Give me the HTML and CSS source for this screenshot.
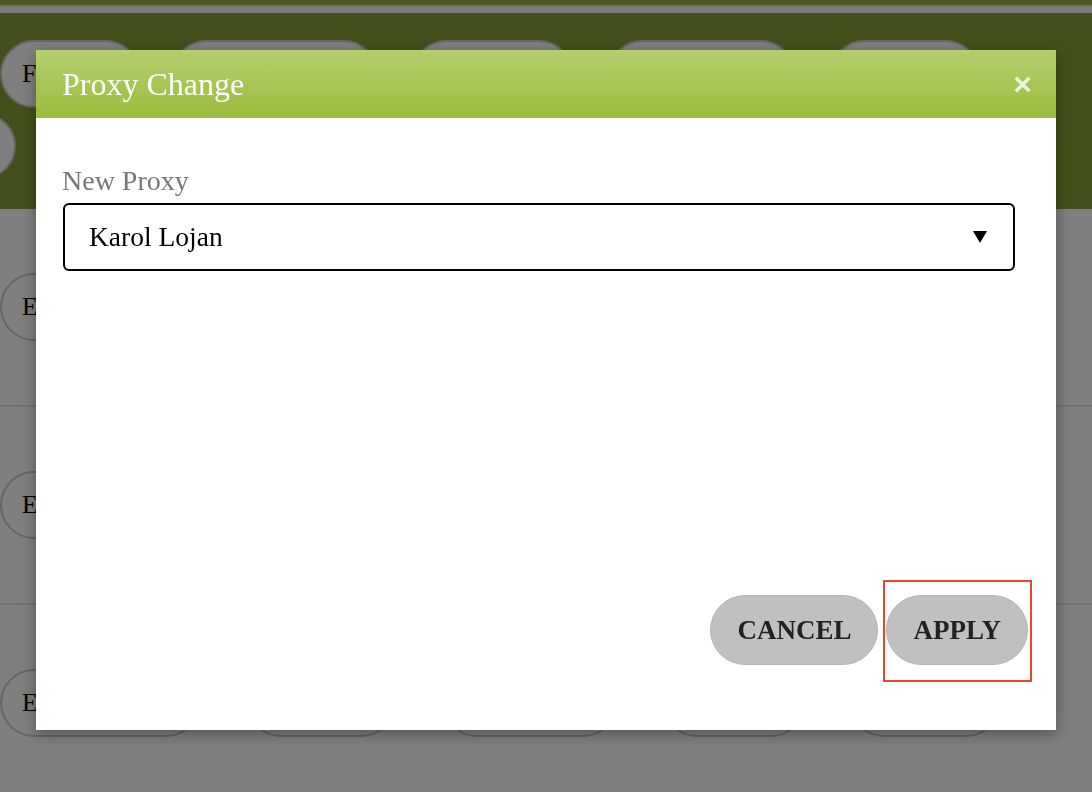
FILE: index.html
```html
<!DOCTYPE html>
<html lang="en">

<head>
    <meta charset="UTF-8">
    <meta name="viewport" content="width=device-width, initial-scale=1.0">
    <title>Proxy Change</title>
    <link rel="stylesheet" href="styles.css">
</head>

<body>
    <div class="topstrip"></div>

    <header class="filters">
        <div class="pill-row">
            <button class="pill">Filter</button>
            <button class="pill">Employees</button>
            <button class="pill">Teams</button>
            <button class="pill">Locations</button>
            <button class="pill">Status</button>
        </div>
        <div class="pill-row">
            <button class="pill pill-cut" aria-label="More"></button>
        </div>
    </header>

    <section class="list">
        <div class="list-row">
            <button class="pill">Edit Proxy</button>
            <button class="pill">Details</button>
            <button class="pill">History</button>
            <button class="pill">Notes</button>
            <button class="pill">Remove</button>
        </div>
        <div class="list-row">
            <button class="pill">Edit Proxy</button>
            <button class="pill">Details</button>
            <button class="pill">History</button>
            <button class="pill">Notes</button>
            <button class="pill">Remove</button>
        </div>
        <div class="list-row">
            <button class="pill">Edit Proxy</button>
            <button class="pill">Details</button>
            <button class="pill">History</button>
            <button class="pill">Notes</button>
            <button class="pill">Remove</button>
        </div>
    </section>

    <div class="overlay"></div>

    <div class="modal">
        <div class="modal-head">
            <h2>Proxy Change</h2>
            <span class="close">&times;</span>
        </div>

        <div class="modal-body">
            <label class="field-label" for="proxy">New Proxy</label>
            <div class="select" id="proxy">
                <span>Karol Lojan</span>
                <svg class="caret" width="14" height="12" viewBox="0 0 14 12">
                    <polygon points="0,0 14,0 7,12" fill="#000" />
                </svg>
            </div>

            <div class="modal-foot">
                <button class="bt">CANCEL</button>
                <span class="apply-wrap">
                    <button class="bt">APPLY</button>
                    <span class="highlight"></span>
                </span>
            </div>
        </div>
    </div>
</body>
</html>
```

FILE: styles.css
```css
body {
    margin: 0;
    padding: 0;
    background: #fff;
    font-family: "Liberation Serif", "Times New Roman", serif;
    overflow: hidden;
}
.topstrip {
    height: 7px;
    background: #96ac42;
    border-bottom: 6px solid #f8f8f8;
    box-shadow: inset 0 -2px 0 #dedede;
}
.filters {
    background: #88a038;
    padding: 27px 0 30px;
    display: flex;
    flex-direction: column;
    gap: 5px;
}
.pill-row,
.list-row {
    display: flex;
}
.pill {
    height: 68px;
    box-sizing: border-box;
    background: #fff;
    border: 2px solid #cacaca;
    border-radius: 34px;
    padding: 0 20px;
    font-family: "Liberation Serif", serif;
    font-size: 26px;
    color: #000;
    text-align: left;
    white-space: nowrap;
    flex-shrink: 0;
}
.pill-row .pill:nth-child(1) { width: 140px; }
.pill-row .pill:nth-child(2) { width: 206px; margin-left: 32px; }
.pill-row .pill:nth-child(3) { width: 161px; margin-left: 34px; }
.pill-row .pill:nth-child(4) { width: 187px; margin-left: 35px; }
.pill-row .pill:nth-child(5) { width: 150px; margin-left: 35px; }
.pill-row .pill.pill-cut {
    width: 66px;
    height: 66px;
    margin-left: -50px;
}
.list-row {
    padding: 64px 0;
    border-bottom: 2px solid #e4e4e4;
}
.list-row .pill:nth-child(1) { width: 200px; }
.list-row .pill:nth-child(2) { width: 148px; margin-left: 47px; }
.list-row .pill:nth-child(3) { width: 174px; margin-left: 48px; }
.list-row .pill:nth-child(4) { width: 142px; margin-left: 46px; }
.list-row .pill:nth-child(5) { width: 150px; margin-left: 45px; }

.overlay {
    position: fixed;
    inset: 0;
    background: rgba(0, 0, 0, 0.5);
}
.modal {
    position: fixed;
    left: 36px;
    top: 50px;
    width: 1020px;
    height: 680px;
    background: #fff;
    box-shadow: 0 4px 14px rgba(0, 0, 0, 0.35);
    display: flex;
    flex-direction: column;
}
.modal-head {
    height: 68px;
    background: linear-gradient(to bottom, #b4cf6f, #9bbc3b);
    display: flex;
    align-items: center;
    justify-content: space-between;
    padding: 0 24px 0 26px;
}
.modal-head h2 {
    margin: 0;
    font-weight: normal;
    font-size: 32px;
    color: #fff;
}
.close {
    font-family: "Liberation Sans", Arial, sans-serif;
    font-weight: bold;
    font-size: 32px;
    line-height: 1;
    color: rgba(255, 255, 255, 0.78);
    cursor: pointer;
}
.modal-body {
    flex: 1;
    display: flex;
    flex-direction: column;
    padding: 49px 28px 65px 26px;
}
.field-label {
    display: block;
    font-size: 28px;
    line-height: 28px;
    color: #777;
}
.select {
    margin: 8px 13px 0 1px;
    height: 68px;
    box-sizing: border-box;
    border: 2px solid #000;
    border-radius: 6px;
    padding: 0 26px 0 24px;
    display: flex;
    align-items: center;
    justify-content: space-between;
    font-size: 27.5px;
    color: #000;
}
.caret {
    display: block;
}
.modal-foot {
    margin-top: auto;
    display: flex;
    justify-content: flex-end;
    gap: 8px;
}
.bt {
    height: 70px;
    box-sizing: border-box;
    padding: 0 26px;
    background: #c0c0c0;
    border: 1px solid #b4b4b4;
    border-radius: 35px;
    font-family: "Liberation Serif", serif;
    font-weight: bold;
    font-size: 27px;
    color: #222;
    cursor: pointer;
}
.apply-wrap {
    position: relative;
    display: flex;
}
.highlight {
    position: absolute;
    top: -15px;
    bottom: -17px;
    left: -3px;
    right: -4px;
    border: 2px solid #e8472b;
    pointer-events: none;
}
```
